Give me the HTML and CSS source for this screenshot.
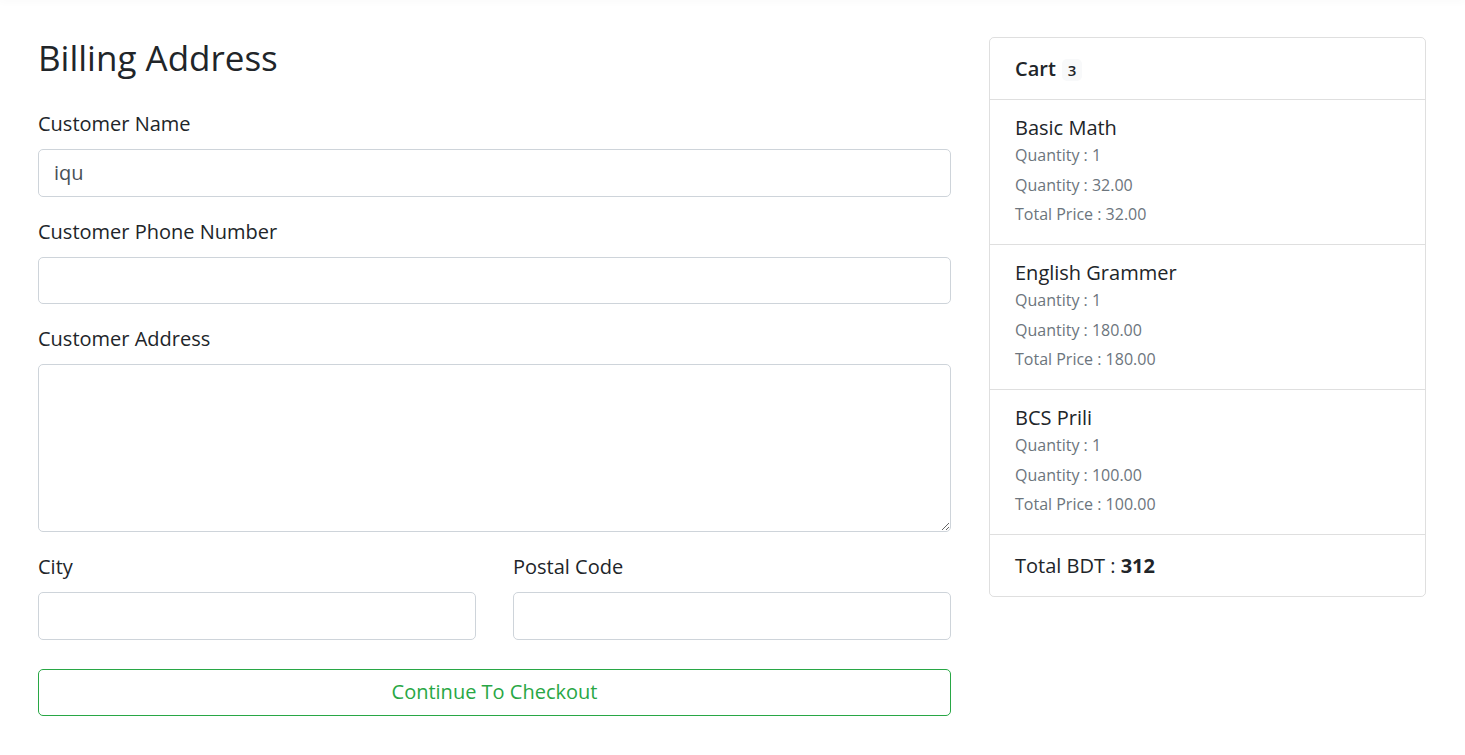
FILE: index.html
```html
<!DOCTYPE html>
<html lang="en">
<head>
<meta charset="utf-8">
<title>Billing Address</title>
<link rel="stylesheet" href="styles.css">
</head>
<body>
<div class="topbar"></div>
<div class="page">
  <main class="billing">
    <h3 class="title">Billing Address</h3>
    <form class="form">
      <div class="group">
        <label class="label">Customer Name</label>
        <input class="control" type="text" value="iqu">
      </div>
      <div class="group">
        <label class="label">Customer Phone Number</label>
        <input class="control" type="text">
      </div>
      <div class="group">
        <label class="label">Customer Address</label>
        <textarea class="control area" rows="5"></textarea>
      </div>
      <div class="split">
        <div class="group">
          <label class="label">City</label>
          <input class="control" type="text">
        </div>
        <div class="group">
          <label class="label">Postal Code</label>
          <input class="control" type="text">
        </div>
      </div>
      <button type="button" class="checkout">Continue To Checkout</button>
    </form>
  </main>
  <aside class="cart">
    <div class="cart-head">
      <span class="cart-title">Cart</span><span class="badge">3</span>
    </div>
    <div class="item">
      <div class="item-name">Basic Math</div>
      <div class="meta">Quantity : 1</div>
      <div class="meta">Quantity : 32.00</div>
      <div class="meta">Total Price : 32.00</div>
    </div>
    <div class="item">
      <div class="item-name">English Grammer</div>
      <div class="meta">Quantity : 1</div>
      <div class="meta">Quantity : 180.00</div>
      <div class="meta">Total Price : 180.00</div>
    </div>
    <div class="item">
      <div class="item-name">BCS Prili</div>
      <div class="meta">Quantity : 1</div>
      <div class="meta">Quantity : 100.00</div>
      <div class="meta">Total Price : 100.00</div>
    </div>
    <div class="total">Total BDT : <strong>312</strong></div>
  </aside>
</div>
</body>
</html>
```
FILE: styles.css
```css
* { box-sizing: border-box; }
html, body { margin: 0; padding: 0; }
body {
  font-family: "Open Sans", "Noto Sans", "Liberation Sans", sans-serif;
  font-size: 20px;
  line-height: 1.5;
  color: #212529;
  background: #fff;
}
.topbar {
  height: 0;
  box-shadow: 0 0 7px 1px rgba(0, 0, 0, 0.06);
}
.page {
  display: grid;
  grid-template-columns: 913px 437px;
  column-gap: 38px;
  padding: 0 38px;
  align-items: start;
}
.billing { padding-top: 37px; }
.title {
  margin: 0 0 30px;
  font-size: 35px;
  font-weight: 400;
  line-height: 42px;
}
.form { margin: 0; }
.group { margin-bottom: 20px; }
.label {
  display: block;
  margin-bottom: 10px;
  line-height: 30px;
}
.control {
  display: block;
  width: 100%;
  height: 47.5px;
  padding: 7.5px 15px;
  font-family: inherit;
  font-size: 20px;
  line-height: 30px;
  color: #495057;
  background: #fff;
  border: 1px solid #ced4da;
  border-radius: 5px;
  margin: 0;
}
.area {
  height: 168px;
  resize: vertical;
}
.split {
  display: grid;
  grid-template-columns: 1fr 1fr;
  column-gap: 37px;
}
.split .group { margin-bottom: 19px; }
.checkout {
  display: block;
  width: 100%;
  height: 47.5px;
  margin-top: 10px;
  padding: 7.5px 15px;
  font-family: inherit;
  font-size: 20px;
  line-height: 30px;
  color: #28a745;
  background: #fff;
  border: 1px solid #28a745;
  border-radius: 5px;
  text-align: center;
}
.cart {
  margin-top: 37px;
  border: 1px solid rgba(0, 0, 0, 0.125);
  border-radius: 5px;
}
.cart-head {
  display: flex;
  align-items: center;
  padding: 15px 25px;
  line-height: 31px;
  border-bottom: 1px solid rgba(0, 0, 0, 0.125);
}
.cart-title { font-weight: 600; }
.badge {
  display: inline-block;
  margin-left: 6px;
  margin-top: 3px;
  padding: 3.75px 6px;
  font-size: 15px;
  font-weight: 600;
  line-height: 1;
  background: #f8f9fa;
  border-radius: 5px;
}
.item {
  padding: 15px 25px;
  border-bottom: 1px solid rgba(0, 0, 0, 0.125);
}
.item-name {
  line-height: 25px;
}
.meta {
  font-size: 16px;
  line-height: 30px;
  color: #6c757d;
}
.meta:last-child { line-height: 29px; }
.total {
  padding: 15px 25px;
  line-height: 31px;
}
.total strong { font-weight: 700; }
```
